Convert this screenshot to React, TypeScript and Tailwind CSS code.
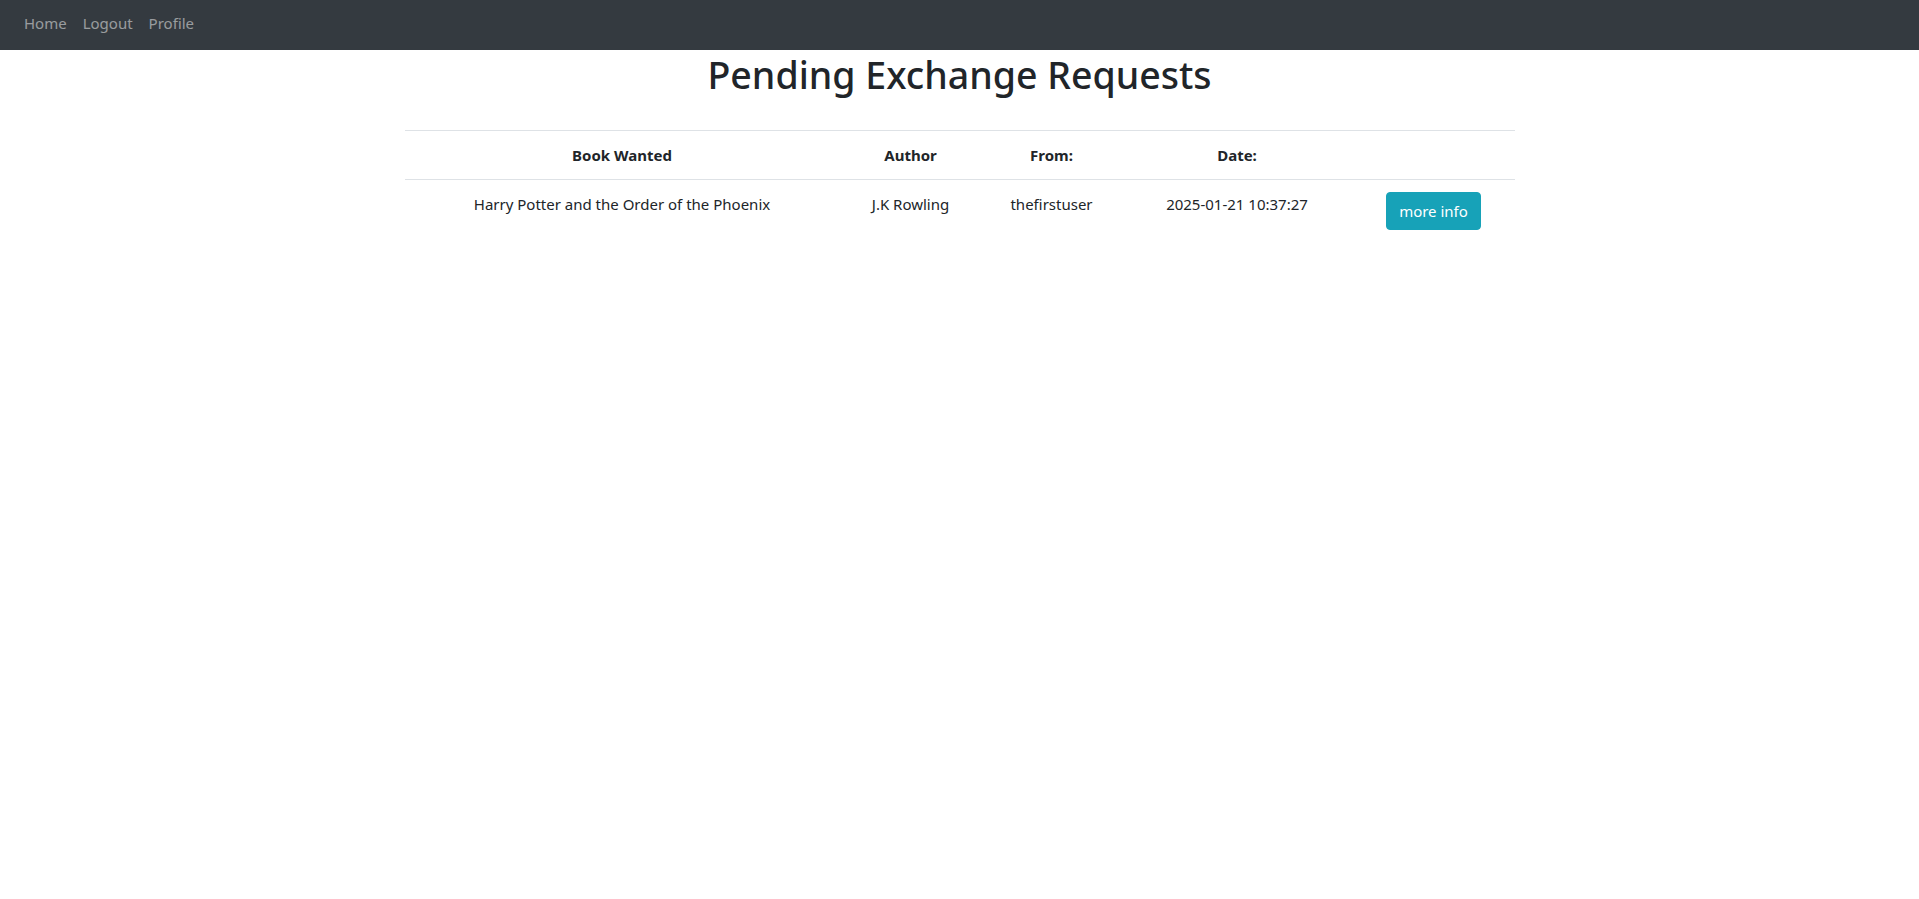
const requests = [
  {
    id: 1,
    book: "Harry Potter and the Order of the Phoenix",
    author: "J.K Rowling",
    from: "thefirstuser",
    date: "2025-01-21 10:37:27",
  },
];

const App: React.FC = () => {
  return (
    <div className="min-h-screen bg-white font-['Segoe_UI','Noto_Sans',sans-serif] text-[#212529]">
      <nav className="flex h-[50px] items-center bg-[#343a40] px-4 pb-1">
        {["Home", "Logout", "Profile"].map((link) => (
          <a key={link} href="#" className="px-2 text-[15px] leading-6 text-white/50 hover:text-white/75">
            {link}
          </a>
        ))}
      </nav>

      <div className="mx-auto w-[1140px] px-[15px]">
        <h1 className="mt-[1px] mb-2 text-center text-[37.5px] leading-[48px] font-medium">Pending Exchange Requests</h1>

        <table className="mt-[31px] w-full border-collapse text-center text-[15px] leading-6">
          <thead>
            <tr className="border-t border-[#dee2e6]">
              <th className="w-[435px] border-b border-[#dee2e6] p-3 font-bold">Book Wanted</th>
              <th className="w-[142px] border-b border-[#dee2e6] p-3 font-bold">Author</th>
              <th className="w-[140px] border-b border-[#dee2e6] p-3 font-bold">From:</th>
              <th className="w-[231px] border-b border-[#dee2e6] p-3 font-bold">Date:</th>
              <th className="w-[162px] border-b border-[#dee2e6] p-3"></th>
            </tr>
          </thead>
          <tbody>
            {requests.map((req) => (
              <tr key={req.id}>
                <td className="p-3 align-top">{req.book}</td>
                <td className="p-3 align-top">{req.author}</td>
                <td className="p-3 align-top">{req.from}</td>
                <td className="p-3 align-top">{req.date}</td>
                <td className="p-3 align-top">
                  <button className="rounded-[4px] border border-[#17a2b8] bg-[#17a2b8] px-3 py-[6px] text-[15px] leading-6 text-white hover:bg-[#138496]">
                    more info
                  </button>
                </td>
              </tr>
            ))}
          </tbody>
        </table>
      </div>
    </div>
  );
};

export default App;
